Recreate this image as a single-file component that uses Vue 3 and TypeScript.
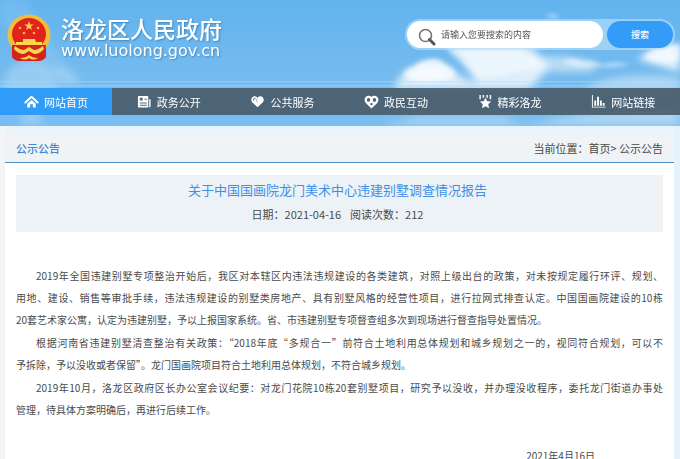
<script setup lang="ts">
import { ref } from 'vue'

interface NavItem {
  label: string
  icon: string
}

const keyword = ref('')

const navItems: NavItem[] = [
  { label: '网站首页', icon: 'home' },
  { label: '政务公开', icon: 'news' },
  { label: '公共服务', icon: 'heart' },
  { label: '政民互动', icon: 'knot' },
  { label: '精彩洛龙', icon: 'star' },
  { label: '网站链接', icon: 'chart' },
]
</script>

<template>
  <div class="page" lang="zh-CN">
    <div class="top">
      <svg class="sky" viewBox="0 0 680 127" preserveAspectRatio="none" aria-hidden="true">
        <defs>
          <linearGradient id="sky" x1="0" y1="0" x2="0" y2="1">
            <stop offset="0" stop-color="#62b3ee" />
            <stop offset="0.6" stop-color="#75bbee" />
            <stop offset="1" stop-color="#7bbdf0" />
          </linearGradient>
          <filter id="soft" x="-20%" y="-40%" width="140%" height="180%"><feGaussianBlur stdDeviation="4" /></filter>
          <filter id="edge" x="-20%" y="-40%" width="140%" height="180%"><feGaussianBlur stdDeviation="2" /></filter>
        </defs>
        <rect width="680" height="127" fill="url(#sky)" />
        <g filter="url(#soft)" fill="#fff">
          <path d="M0 0H26L44 30 78 82 62 88 28 52 0 20z" opacity="0.1" />
          <circle cx="30" cy="88" r="27" opacity="0.25" />
          <path d="M34 96l10 31H18z" opacity="0.2" />
          <ellipse cx="66" cy="76" rx="15" ry="6" transform="rotate(30 66 76)" opacity="0.2" />
          <path d="M394 90q8-22 28-26 20-6 34 10l28 16z" opacity="0.75" />
          <path d="M446 46h84q12 10 18 20-4 12-20 24h-50q-12-30-32-44z" opacity="0.75" />
          <path d="M530 60q30-8 62 2 6 4 2 10-30 2-66-2z" opacity="0.5" />
          <path d="M638 60q16-16 42-16v28q-18-4-42-12z" opacity="0.8" />
          <path d="M580 92h100V78q-50-6-80 4z" opacity="0.4" />
          <path d="M520 127l60-12 100-10v22z" opacity="0.35" />
          <path d="M380 127l40-10h80l30 10z" opacity="0.3" />
        </g>
        <g filter="url(#edge)" fill="#fff">
          <path d="M404 76q2-8 10-8 4-6 14-8 12-3 18 6 8 2 10 10-10 6-26 6-16 2-26-6z" opacity="0.7" />
          <path d="M446 49h74q10 5 18 12-6 12-26 12-18 8-36 4-12-14-30-28z" opacity="0.45" />
          <path d="M562 62q12-5 20 0 12-2 20 3 14-4 28 0-16 4-36 2-20 2-32-5z" opacity="0.5" />
          <path d="M643 58q8-9 20-11l17-2v16q-20 4-37-3z" opacity="0.55" />
          <path d="M545 16q6-4 12-1l4 2-8 2z" opacity="0.4" />
        </g>
        <rect y="82" width="680" height="1" fill="#b4dbf7" opacity="0.6" />
        <rect y="86" width="680" height="1" fill="#b4dbf7" opacity="0.6" />
      </svg>

      <header class="header">
        <a class="brand" href="#">
          <svg class="emblem" viewBox="0 0 44 48" aria-hidden="true">
            <path d="M5 28v15q3 4 8 3l3 1h12l3-1q5 1 8-3V28z" fill="#d5231c" />
            <ellipse cx="22" cy="21" rx="21.500" ry="20.500" fill="#f1bd3a" />
            <ellipse cx="22" cy="20" rx="17" ry="16" fill="#e2231b" />
            <path d="M22 7l1.200 3.400h3.600l-2.900 2.200 1.100 3.500-3-2.100-3 2.100 1.100-3.500-2.900-2.200h3.600z" fill="#fbd54b" />
            <g fill="#f6b83e">
              <circle cx="13" cy="14" r="1.300" /><circle cx="31" cy="14" r="1.300" />
              <circle cx="17" cy="19" r="1.300" /><circle cx="27" cy="19" r="1.300" />
            </g>
            <path d="M16 25h12l1 3h6v3H9v-3h7z" fill="#fbd54b" />
            <path d="M5 31h34l-1 9q0 6-5 7H11q-5-1-6-7z" fill="#d5231c" />
            <path d="M8 32q5 4 9 4l5-3 5 3q4 0 9-4l1 3q-4 5-10 5l-5-3-5 3q-6 0-10-5z" fill="#fbd54b" />
            <path d="M13 44q6 0 9-3 3 3 9 3-5 3-9 0-4 3-9 0z" fill="#fbd54b" />
          </svg>
          <span class="brand-text">
            <span class="brand-name">洛龙区人民政府</span>
            <span class="brand-url">www.luolong.gov.cn</span>
          </span>
        </a>

        <form class="search" role="search" @submit.prevent>
          <label class="field">
            <svg class="lens" viewBox="0 0 18 18" aria-hidden="true">
              <circle cx="7.500" cy="7.500" r="6" fill="none" stroke="#747474" stroke-width="1.600" />
              <path d="M11.500 11.500l4.500 4.500" stroke="#555" stroke-width="3" stroke-linecap="round" />
            </svg>
            <input v-model="keyword" type="text" placeholder="请输入您要搜索的内容" aria-label="搜索" />
          </label>
          <button type="submit">搜索</button>
        </form>
      </header>

      <nav class="nav">
        <a v-for="(item, i) in navItems" :key="item.label" href="#" :class="{ active: i === 0 }">
          <svg viewBox="0 0 16 16" aria-hidden="true">
            <g v-if="item.icon === 'home'">
              <path d="M1.500 9L8 3l6.500 6" fill="none" stroke="#fff" stroke-width="2.200" stroke-linecap="round" stroke-linejoin="round" />
              <path d="M3.500 10.500L8 6.500l4.500 4v4h-3V11h-3v3.500h-3z" fill="#fff" />
            </g>
            <g v-else-if="item.icon === 'news'">
              <path d="M1 3q0-1 1-1h9q1 0 1 1v11.500H2q-1 0-1-1z" fill="#fff" />
              <path d="M13 5.500h1.500v7q0 2-1.500 2z" fill="#fff" />
              <path d="M3 4h3v3H3zM8 5h2.500v1H8zM3 9h7.500v1H3zM3 11.500h7.500v1H3z" fill="#506778" />
            </g>
            <g v-else-if="item.icon === 'heart'">
              <path d="M8 14L2 8.500Q.5 6 2 4q3-3 6 0 3-3 6 0 1.500 2.500 0 4.500z" fill="#fff" />
              <path d="M3.500 7q0-2.500 2.500-2.500" fill="none" stroke="#506778" />
              <path d="M8 4.500L6.500 7.500l2 1" fill="none" stroke="#a9b8c2" />
            </g>
            <g v-else-if="item.icon === 'knot'" fill="none" stroke="#fff" stroke-width="2.400">
              <circle cx="5" cy="6.300" r="3.200" />
              <circle cx="11" cy="6.300" r="3.200" />
              <path d="M3 9l5 4.800L13 9M6.500 9L9 6.500" />
            </g>
            <g v-else-if="item.icon === 'star'" fill="#fff">
              <path d="M1.500 1h1.500v4.500H1.500zM5 1h1.500v3H5zM9 1h1.500v3H9zM12.500 1H14v4.500h-1.500z" />
              <path d="M8 4l1.800 3.700 4.200.4-3.100 2.800.9 4.300L8 13l-3.800 2.200.9-4.300L2 8.100l4.200-.4z" />
            </g>
            <path v-else d="M1 1h1v12.500h13.500v1H1zM3.500 7h2v5.500h-2zM6.500 3h2v9.500h-2zM9.500 7h2v5.500h-2zM12.500 9.500h2v3h-2z" fill="#fff" />
          </svg>
          <span>{{ item.label }}</span>
        </a>
      </nav>
    </div>

    <main class="card">
      <div class="bar">
        <h2>公示公告</h2>
        <div class="crumbs">当前位置：<a href="#">首页</a>&gt; <a href="#">公示公告</a></div>
      </div>

      <article>
        <div class="headline">
          <h1>关于中国国画院龙门美术中心违建别墅调查情况报告</h1>
          <div class="meta"><span>日期：2021-04-16</span><span>阅读次数：212</span></div>
        </div>

        <div class="content">
          <p>2019年全国违建别墅专项整治开始后，我区对本辖区内违法违规建设的各类建筑，对照上级出台的政策，对未按规定履行环评、规划、<span class="phrase">用地、建设、</span>销售等审批手续，违法违规建设的别墅类房地产、具有别墅风格的经营性项目，进行拉网式排查认定。中国国画院建设的10栋<wbr />20套艺术家公寓，认定为违建别墅，予以上报国家系统。省、市违建别墅专项督查组多次到现场进行督查指导处置情况。</p>
          <p>根据河南省违建别墅清查整治有关政策：“2018年底“多规合一”前符合土地利用总体规划和城乡规划之一的，视同符合规划，可以不<wbr />予拆除，予以没收或者保留”。龙门国画院项目符合土地利用总体规划，不符合城乡规划。</p>
          <p>2019年10月，洛龙区政府区长办公室会议纪要：对龙门花院10栋20套别墅项目，研究予以没收，并办理没收程序，委托龙门街道办事处<wbr /><span class="phrase">管理，待具体方案明确后，</span>再进行后续工作。</p>
          <div class="signed">2021年4月16日</div>
        </div>
      </article>
    </main>
  </div>
</template>

<style>
body {
  margin: 0;
}
</style>

<style scoped>
.page {
  min-height: 100vh;
  background: linear-gradient(90deg, #f4f5f6 0%, #f4f5f6 50%, #e6f2fb 50%, #e6f2fb 100%);
  color: #4a4a4a;
  font-family: "Noto Sans CJK SC", "Liberation Sans", sans-serif;
  font-size: 11px;
}

a {
  color: inherit;
  text-decoration: none;
}

.top {
  position: relative;
  padding-bottom: 11px;
  overflow: hidden;
}

.sky {
  position: absolute;
  inset: 0;
  width: 100%;
  height: 100%;
}

.header {
  position: relative;
  display: flex;
  align-items: flex-start;
  justify-content: space-between;
  height: 74px;
  padding: 14px 5px 0 7px;
}

.brand {
  display: flex;
  gap: 10px;
  color: #fff;
}

.emblem {
  width: 44px;
  height: 48px;
}

.brand-text {
  display: flex;
  flex-direction: column;
  text-shadow: 1px 1px 2px #3f86bd;
}

.brand-name {
  font-size: 23px;
  font-weight: 500;
  line-height: 29px;
}

.brand-url {
  font-family: "DejaVu Sans", sans-serif;
  font-size: 16px;
  line-height: 16px;
}

.search {
  display: flex;
  gap: 4px;
  box-sizing: border-box;
  width: 270px;
  height: 31px;
  margin-top: 5px;
  padding: 2px;
  border-radius: 16px;
  background: rgba(190, 226, 250, 0.6);
}

.field {
  display: flex;
  flex: 1;
  align-items: center;
  gap: 5px;
  min-width: 0;
  padding-left: 11px;
  border-radius: 14px;
  background: #fff;
}

.lens {
  flex: none;
  width: 18px;
  height: 18px;
  margin-top: 4px;
}

.field input {
  flex: 1;
  min-width: 0;
  padding: 0;
  border: 0;
  outline: 0;
  background: transparent;
  color: #555;
  font: inherit;
  font-size: 9px;
}

.field input::placeholder {
  color: #555;
  opacity: 1;
}

.search button {
  width: 66px;
  padding: 0;
  border: 0;
  border-radius: 14px;
  background: #339bf8;
  color: #fff;
  font: inherit;
  font-size: 9px;
  font-weight: 500;
}

.nav {
  position: relative;
  display: grid;
  grid-template-columns: 112px repeat(5, 1fr);
  height: 27px;
  background: rgba(74, 94, 109, 0.93);
}

.nav a {
  display: flex;
  align-items: center;
  justify-content: center;
  gap: 5px;
  color: #fff;
}

.nav a.active {
  background: #2f9cf7;
}

.nav svg {
  width: 15px;
  height: 15px;
}

.card {
  box-sizing: border-box;
  min-height: calc(100vh - 126px);
  margin: 0 6px 0 5px;
  background: #fff;
}

.bar {
  display: flex;
  align-items: center;
  justify-content: space-between;
  height: 36px;
  padding: 0 11px;
  border-bottom: 1px solid #4f8fbb;
  background: linear-gradient(#e8f3fc, #f2f3f5 40%, #edf3f7);
}

.bar h2 {
  margin: 8px 0 0;
  color: #3f88d8;
  font-size: 11px;
  font-weight: 500;
}

.crumbs {
  margin-top: 8px;
}

article {
  padding: 12px 11px 0;
}

.headline {
  display: flex;
  flex-direction: column;
  align-items: center;
  gap: 6px;
  padding: 4px 0 7px;
  border: 1px solid #f1f1f1;
  border-width: 1px 5px 3px 1px;
  background: #edf2f6;
}

.headline h1 {
  margin: 0;
  color: #3f8fe6;
  font-size: 13px;
  font-weight: 400;
  line-height: 20px;
}

.meta {
  display: flex;
  gap: 9px;
  line-height: 16px;
}

.content {
  padding-top: 33px;
  font-size: 10px;
  line-height: 22px;
}

.content p {
  margin: 0 0 1px;
  text-align: justify;
  text-indent: 2em;
  word-break: keep-all;
}

.phrase {
  white-space: nowrap;
}

.signed {
  margin-top: 24px;
  padding-right: 68px;
  text-align: right;
}
</style>
